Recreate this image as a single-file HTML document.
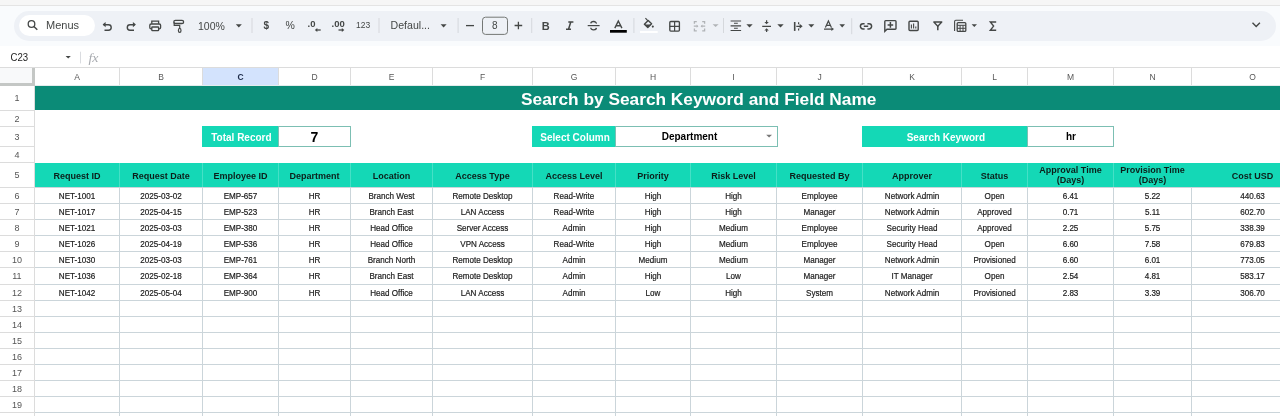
<!DOCTYPE html><html><head><meta charset="utf-8"><style>
*{margin:0;padding:0;box-sizing:border-box}
html,body{width:1280px;height:416px;overflow:hidden;background:#f9fbfd;font-family:"Liberation Sans",sans-serif}
body{position:relative}
div{position:absolute}
svg{position:absolute;left:0;top:0;overflow:visible;will-change:transform}
text{font-family:"Liberation Sans",sans-serif}
.d{font-size:9.2px;fill:#1a1a1a;stroke:#1a1a1a;stroke-width:0.2;text-anchor:middle}
.h{font-size:9px;font-weight:bold;fill:#0c1f1a;text-anchor:middle}
.rn{font-size:9px;fill:#555;text-anchor:middle}
.cl{font-size:8.5px;fill:#575757;text-anchor:middle}
.lb{font-size:10px;font-weight:bold;fill:#fff;text-anchor:middle}
.vb{font-size:10px;font-weight:bold;fill:#000;text-anchor:middle}
.tb{font-size:10.5px;fill:#444746}
.ic{fill:none;stroke:#444746;stroke-width:1.4}
.if{fill:#444746}
</style></head><body>
<div style="left:0px;top:0px;width:1280px;height:5px;background:#f6f6f6"></div>
<div style="left:0px;top:5px;width:1280px;height:1px;background:#e4e4e4"></div>
<div style="left:14px;top:11px;width:1262px;height:30px;background:#eef1f6;border-radius:15px"></div>
<div style="left:19px;top:15px;width:76px;height:21px;background:#fff;border-radius:11px"></div>
<div style="left:0px;top:46px;width:1280px;height:21px;background:#fff"></div>
<div style="left:0px;top:67px;width:1280px;height:349px;background:#fff"></div>
<div style="left:0px;top:67px;width:1280px;height:1px;background:#dcdcdc"></div>
<div style="left:0px;top:68px;width:34px;height:17px;background:#f8f9fa"></div>
<div style="left:32px;top:68px;width:3px;height:18px;background:#c4c7c5"></div>
<div style="left:0px;top:83px;width:35px;height:3px;background:#c4c7c5"></div>
<div style="left:203px;top:68px;width:75px;height:17px;background:#d3e3fd"></div>
<div style="left:119px;top:68px;width:1px;height:17px;background:#dcdcdc"></div>
<div style="left:202px;top:68px;width:1px;height:17px;background:#dcdcdc"></div>
<div style="left:278px;top:68px;width:1px;height:17px;background:#dcdcdc"></div>
<div style="left:350px;top:68px;width:1px;height:17px;background:#dcdcdc"></div>
<div style="left:432px;top:68px;width:1px;height:17px;background:#dcdcdc"></div>
<div style="left:532px;top:68px;width:1px;height:17px;background:#dcdcdc"></div>
<div style="left:615px;top:68px;width:1px;height:17px;background:#dcdcdc"></div>
<div style="left:690px;top:68px;width:1px;height:17px;background:#dcdcdc"></div>
<div style="left:776px;top:68px;width:1px;height:17px;background:#dcdcdc"></div>
<div style="left:862px;top:68px;width:1px;height:17px;background:#dcdcdc"></div>
<div style="left:961px;top:68px;width:1px;height:17px;background:#dcdcdc"></div>
<div style="left:1027px;top:68px;width:1px;height:17px;background:#dcdcdc"></div>
<div style="left:1113px;top:68px;width:1px;height:17px;background:#dcdcdc"></div>
<div style="left:1191px;top:68px;width:1px;height:17px;background:#dcdcdc"></div>
<div style="left:35px;top:85px;width:1245px;height:1px;background:#e3ecec"></div>
<div style="left:34px;top:86px;width:1px;height:330px;background:#dcdcdc"></div>
<div style="left:0px;top:110px;width:34px;height:1px;background:#dcdcdc"></div>
<div style="left:0px;top:126px;width:34px;height:1px;background:#dcdcdc"></div>
<div style="left:0px;top:146px;width:34px;height:1px;background:#dcdcdc"></div>
<div style="left:0px;top:162px;width:34px;height:1px;background:#dcdcdc"></div>
<div style="left:0px;top:187px;width:34px;height:1px;background:#dcdcdc"></div>
<div style="left:0px;top:203px;width:34px;height:1px;background:#dcdcdc"></div>
<div style="left:0px;top:219px;width:34px;height:1px;background:#dcdcdc"></div>
<div style="left:0px;top:235px;width:34px;height:1px;background:#dcdcdc"></div>
<div style="left:0px;top:251px;width:34px;height:1px;background:#dcdcdc"></div>
<div style="left:0px;top:267px;width:34px;height:1px;background:#dcdcdc"></div>
<div style="left:0px;top:284px;width:34px;height:1px;background:#dcdcdc"></div>
<div style="left:0px;top:300px;width:34px;height:1px;background:#dcdcdc"></div>
<div style="left:0px;top:316px;width:34px;height:1px;background:#dcdcdc"></div>
<div style="left:0px;top:332px;width:34px;height:1px;background:#dcdcdc"></div>
<div style="left:0px;top:348px;width:34px;height:1px;background:#dcdcdc"></div>
<div style="left:0px;top:364px;width:34px;height:1px;background:#dcdcdc"></div>
<div style="left:0px;top:380px;width:34px;height:1px;background:#dcdcdc"></div>
<div style="left:0px;top:396px;width:34px;height:1px;background:#dcdcdc"></div>
<div style="left:0px;top:412px;width:34px;height:1px;background:#dcdcdc"></div>
<div style="left:0px;top:428px;width:34px;height:1px;background:#dcdcdc"></div>
<div style="left:35px;top:86px;width:1245px;height:24px;background:#0b8b77"></div>
<div style="left:202px;top:126px;width:76px;height:21px;background:#14d8b6"></div>
<div style="left:278px;top:126px;width:73px;height:21px;border:1px solid #7cbfb3;background:#fff"></div>
<div style="left:532px;top:126px;width:83px;height:21px;background:#14d8b6"></div>
<div style="left:615px;top:126px;width:163px;height:21px;border:1px solid #7cbfb3;background:#fff"></div>
<div style="left:862px;top:126px;width:165px;height:21px;background:#14d8b6"></div>
<div style="left:1027px;top:126px;width:87px;height:21px;border:1px solid #7cbfb3;background:#fff"></div>
<div style="left:35px;top:163px;width:1245px;height:24px;background:#14d8b6"></div>
<div style="left:119px;top:163px;width:1px;height:24px;background:#45e0c6"></div>
<div style="left:202px;top:163px;width:1px;height:24px;background:#45e0c6"></div>
<div style="left:278px;top:163px;width:1px;height:24px;background:#45e0c6"></div>
<div style="left:350px;top:163px;width:1px;height:24px;background:#45e0c6"></div>
<div style="left:432px;top:163px;width:1px;height:24px;background:#45e0c6"></div>
<div style="left:532px;top:163px;width:1px;height:24px;background:#45e0c6"></div>
<div style="left:615px;top:163px;width:1px;height:24px;background:#45e0c6"></div>
<div style="left:690px;top:163px;width:1px;height:24px;background:#45e0c6"></div>
<div style="left:776px;top:163px;width:1px;height:24px;background:#45e0c6"></div>
<div style="left:862px;top:163px;width:1px;height:24px;background:#45e0c6"></div>
<div style="left:961px;top:163px;width:1px;height:24px;background:#45e0c6"></div>
<div style="left:1027px;top:163px;width:1px;height:24px;background:#45e0c6"></div>
<div style="left:1113px;top:163px;width:1px;height:24px;background:#45e0c6"></div>
<div style="left:119px;top:188px;width:1px;height:228px;background:#cbd5da"></div>
<div style="left:202px;top:188px;width:1px;height:228px;background:#cbd5da"></div>
<div style="left:278px;top:188px;width:1px;height:228px;background:#cbd5da"></div>
<div style="left:350px;top:188px;width:1px;height:228px;background:#cbd5da"></div>
<div style="left:432px;top:188px;width:1px;height:228px;background:#cbd5da"></div>
<div style="left:532px;top:188px;width:1px;height:228px;background:#cbd5da"></div>
<div style="left:615px;top:188px;width:1px;height:228px;background:#cbd5da"></div>
<div style="left:690px;top:188px;width:1px;height:228px;background:#cbd5da"></div>
<div style="left:776px;top:188px;width:1px;height:228px;background:#cbd5da"></div>
<div style="left:862px;top:188px;width:1px;height:228px;background:#cbd5da"></div>
<div style="left:961px;top:188px;width:1px;height:228px;background:#cbd5da"></div>
<div style="left:1027px;top:188px;width:1px;height:228px;background:#cbd5da"></div>
<div style="left:1113px;top:188px;width:1px;height:228px;background:#cbd5da"></div>
<div style="left:1191px;top:188px;width:1px;height:228px;background:#cbd5da"></div>
<div style="left:35px;top:187px;width:1245px;height:1px;background:#cbd5da"></div>
<div style="left:35px;top:203px;width:1245px;height:1px;background:#cbd5da"></div>
<div style="left:35px;top:219px;width:1245px;height:1px;background:#cbd5da"></div>
<div style="left:35px;top:235px;width:1245px;height:1px;background:#cbd5da"></div>
<div style="left:35px;top:251px;width:1245px;height:1px;background:#cbd5da"></div>
<div style="left:35px;top:267px;width:1245px;height:1px;background:#cbd5da"></div>
<div style="left:35px;top:284px;width:1245px;height:1px;background:#cbd5da"></div>
<div style="left:35px;top:300px;width:1245px;height:1px;background:#cbd5da"></div>
<div style="left:35px;top:316px;width:1245px;height:1px;background:#cbd5da"></div>
<div style="left:35px;top:332px;width:1245px;height:1px;background:#cbd5da"></div>
<div style="left:35px;top:348px;width:1245px;height:1px;background:#cbd5da"></div>
<div style="left:35px;top:364px;width:1245px;height:1px;background:#cbd5da"></div>
<div style="left:35px;top:380px;width:1245px;height:1px;background:#cbd5da"></div>
<div style="left:35px;top:396px;width:1245px;height:1px;background:#cbd5da"></div>
<div style="left:35px;top:412px;width:1245px;height:1px;background:#cbd5da"></div>
<div style="left:35px;top:428px;width:1245px;height:1px;background:#cbd5da"></div>
<svg width="1280" height="416" viewBox="0 0 1280 416"><text x="77.0" y="80" class="cl" >A</text><text x="161.0" y="80" class="cl" >B</text><text x="240.5" y="80" class="cl" style="font-weight:bold;fill:#1b2a48">C</text><text x="314.5" y="80" class="cl" >D</text><text x="391.5" y="80" class="cl" >E</text><text x="482.5" y="80" class="cl" >F</text><text x="574.0" y="80" class="cl" >G</text><text x="653.0" y="80" class="cl" >H</text><text x="733.5" y="80" class="cl" >I</text><text x="819.5" y="80" class="cl" >J</text><text x="912.0" y="80" class="cl" >K</text><text x="994.5" y="80" class="cl" >L</text><text x="1070.5" y="80" class="cl" >M</text><text x="1152.5" y="80" class="cl" >N</text><text x="1252.5" y="80" class="cl" >O</text><text x="16.9" y="101.4" class="rn" >1</text><text x="16.9" y="121.9" class="rn" >2</text><text x="16.9" y="139.9" class="rn" >3</text><text x="16.9" y="157.9" class="rn" >4</text><text x="16.9" y="178.4" class="rn" >5</text><text x="16.9" y="198.9" class="rn" >6</text><text x="16.9" y="214.9" class="rn" >7</text><text x="16.9" y="230.9" class="rn" >8</text><text x="16.9" y="246.9" class="rn" >9</text><text x="16.9" y="262.9" class="rn" >10</text><text x="16.9" y="279.4" class="rn" >11</text><text x="16.9" y="295.9" class="rn" >12</text><text x="16.9" y="311.9" class="rn" >13</text><text x="16.9" y="327.9" class="rn" >14</text><text x="16.9" y="343.9" class="rn" >15</text><text x="16.9" y="359.9" class="rn" >16</text><text x="16.9" y="375.9" class="rn" >17</text><text x="16.9" y="391.9" class="rn" >18</text><text x="16.9" y="407.9" class="rn" >19</text><text x="16.9" y="423.9" class="rn" >20</text><text x="521" y="104.6" style="font-size:17.3px;font-weight:bold;fill:#fff">Search by Search Keyword and Field Name</text><text x="241.4" y="140.8" class="lb" >Total Record</text><text x="575.1" y="140.8" class="lb" >Select Column</text><text x="945.9" y="140.8" class="lb" >Search Keyword</text><text x="314.5" y="142.2" class="vb" style="font-size:14px">7</text><text x="689.5" y="140.2" class="vb" >Department</text><text x="1071" y="140.2" class="vb" >hr</text><path d="M766.2 134.8L772 134.8L769.1 137.6Z" fill="#777"/><text x="77.0" y="178.6" class="h" >Request ID</text><text x="161.0" y="178.6" class="h" >Request Date</text><text x="240.5" y="178.6" class="h" >Employee ID</text><text x="314.5" y="178.6" class="h" >Department</text><text x="391.5" y="178.6" class="h" >Location</text><text x="482.5" y="178.6" class="h" >Access Type</text><text x="574.0" y="178.6" class="h" >Access Level</text><text x="653.0" y="178.6" class="h" >Priority</text><text x="733.5" y="178.6" class="h" >Risk Level</text><text x="819.5" y="178.6" class="h" >Requested By</text><text x="912.0" y="178.6" class="h" >Approver</text><text x="994.5" y="178.6" class="h" >Status</text><text x="1070.5" y="173.2" class="h" >Approval Time</text><text x="1070.5" y="183.2" class="h" >(Days)</text><text x="1152.5" y="173.2" class="h" >Provision Time</text><text x="1152.5" y="183.2" class="h" >(Days)</text><text x="1252.5" y="178.6" class="h" >Cost USD</text><text transform="translate(77.0 198.8) scale(0.88 1)" class="d">NET-1001</text><text transform="translate(161.0 198.8) scale(0.88 1)" class="d">2025-03-02</text><text transform="translate(240.5 198.8) scale(0.88 1)" class="d">EMP-657</text><text transform="translate(314.5 198.8) scale(0.88 1)" class="d">HR</text><text transform="translate(391.5 198.8) scale(0.88 1)" class="d">Branch West</text><text transform="translate(482.5 198.8) scale(0.88 1)" class="d">Remote Desktop</text><text transform="translate(574.0 198.8) scale(0.88 1)" class="d">Read-Write</text><text transform="translate(653.0 198.8) scale(0.88 1)" class="d">High</text><text transform="translate(733.5 198.8) scale(0.88 1)" class="d">High</text><text transform="translate(819.5 198.8) scale(0.88 1)" class="d">Employee</text><text transform="translate(912.0 198.8) scale(0.88 1)" class="d">Network Admin</text><text transform="translate(994.5 198.8) scale(0.88 1)" class="d">Open</text><text transform="translate(1070.5 198.8) scale(0.88 1)" class="d">6.41</text><text transform="translate(1152.5 198.8) scale(0.88 1)" class="d">5.22</text><text transform="translate(1252.5 198.8) scale(0.88 1)" class="d">440.63</text><text transform="translate(77.0 214.8) scale(0.88 1)" class="d">NET-1017</text><text transform="translate(161.0 214.8) scale(0.88 1)" class="d">2025-04-15</text><text transform="translate(240.5 214.8) scale(0.88 1)" class="d">EMP-523</text><text transform="translate(314.5 214.8) scale(0.88 1)" class="d">HR</text><text transform="translate(391.5 214.8) scale(0.88 1)" class="d">Branch East</text><text transform="translate(482.5 214.8) scale(0.88 1)" class="d">LAN Access</text><text transform="translate(574.0 214.8) scale(0.88 1)" class="d">Read-Write</text><text transform="translate(653.0 214.8) scale(0.88 1)" class="d">High</text><text transform="translate(733.5 214.8) scale(0.88 1)" class="d">High</text><text transform="translate(819.5 214.8) scale(0.88 1)" class="d">Manager</text><text transform="translate(912.0 214.8) scale(0.88 1)" class="d">Network Admin</text><text transform="translate(994.5 214.8) scale(0.88 1)" class="d">Approved</text><text transform="translate(1070.5 214.8) scale(0.88 1)" class="d">0.71</text><text transform="translate(1152.5 214.8) scale(0.88 1)" class="d">5.11</text><text transform="translate(1252.5 214.8) scale(0.88 1)" class="d">602.70</text><text transform="translate(77.0 230.8) scale(0.88 1)" class="d">NET-1021</text><text transform="translate(161.0 230.8) scale(0.88 1)" class="d">2025-03-03</text><text transform="translate(240.5 230.8) scale(0.88 1)" class="d">EMP-380</text><text transform="translate(314.5 230.8) scale(0.88 1)" class="d">HR</text><text transform="translate(391.5 230.8) scale(0.88 1)" class="d">Head Office</text><text transform="translate(482.5 230.8) scale(0.88 1)" class="d">Server Access</text><text transform="translate(574.0 230.8) scale(0.88 1)" class="d">Admin</text><text transform="translate(653.0 230.8) scale(0.88 1)" class="d">High</text><text transform="translate(733.5 230.8) scale(0.88 1)" class="d">Medium</text><text transform="translate(819.5 230.8) scale(0.88 1)" class="d">Employee</text><text transform="translate(912.0 230.8) scale(0.88 1)" class="d">Security Head</text><text transform="translate(994.5 230.8) scale(0.88 1)" class="d">Approved</text><text transform="translate(1070.5 230.8) scale(0.88 1)" class="d">2.25</text><text transform="translate(1152.5 230.8) scale(0.88 1)" class="d">5.75</text><text transform="translate(1252.5 230.8) scale(0.88 1)" class="d">338.39</text><text transform="translate(77.0 246.8) scale(0.88 1)" class="d">NET-1026</text><text transform="translate(161.0 246.8) scale(0.88 1)" class="d">2025-04-19</text><text transform="translate(240.5 246.8) scale(0.88 1)" class="d">EMP-536</text><text transform="translate(314.5 246.8) scale(0.88 1)" class="d">HR</text><text transform="translate(391.5 246.8) scale(0.88 1)" class="d">Head Office</text><text transform="translate(482.5 246.8) scale(0.88 1)" class="d">VPN Access</text><text transform="translate(574.0 246.8) scale(0.88 1)" class="d">Read-Write</text><text transform="translate(653.0 246.8) scale(0.88 1)" class="d">High</text><text transform="translate(733.5 246.8) scale(0.88 1)" class="d">Medium</text><text transform="translate(819.5 246.8) scale(0.88 1)" class="d">Employee</text><text transform="translate(912.0 246.8) scale(0.88 1)" class="d">Security Head</text><text transform="translate(994.5 246.8) scale(0.88 1)" class="d">Open</text><text transform="translate(1070.5 246.8) scale(0.88 1)" class="d">6.60</text><text transform="translate(1152.5 246.8) scale(0.88 1)" class="d">7.58</text><text transform="translate(1252.5 246.8) scale(0.88 1)" class="d">679.83</text><text transform="translate(77.0 262.8) scale(0.88 1)" class="d">NET-1030</text><text transform="translate(161.0 262.8) scale(0.88 1)" class="d">2025-03-03</text><text transform="translate(240.5 262.8) scale(0.88 1)" class="d">EMP-761</text><text transform="translate(314.5 262.8) scale(0.88 1)" class="d">HR</text><text transform="translate(391.5 262.8) scale(0.88 1)" class="d">Branch North</text><text transform="translate(482.5 262.8) scale(0.88 1)" class="d">Remote Desktop</text><text transform="translate(574.0 262.8) scale(0.88 1)" class="d">Admin</text><text transform="translate(653.0 262.8) scale(0.88 1)" class="d">Medium</text><text transform="translate(733.5 262.8) scale(0.88 1)" class="d">Medium</text><text transform="translate(819.5 262.8) scale(0.88 1)" class="d">Manager</text><text transform="translate(912.0 262.8) scale(0.88 1)" class="d">Network Admin</text><text transform="translate(994.5 262.8) scale(0.88 1)" class="d">Provisioned</text><text transform="translate(1070.5 262.8) scale(0.88 1)" class="d">6.60</text><text transform="translate(1152.5 262.8) scale(0.88 1)" class="d">6.01</text><text transform="translate(1252.5 262.8) scale(0.88 1)" class="d">773.05</text><text transform="translate(77.0 278.8) scale(0.88 1)" class="d">NET-1036</text><text transform="translate(161.0 278.8) scale(0.88 1)" class="d">2025-02-18</text><text transform="translate(240.5 278.8) scale(0.88 1)" class="d">EMP-364</text><text transform="translate(314.5 278.8) scale(0.88 1)" class="d">HR</text><text transform="translate(391.5 278.8) scale(0.88 1)" class="d">Branch East</text><text transform="translate(482.5 278.8) scale(0.88 1)" class="d">Remote Desktop</text><text transform="translate(574.0 278.8) scale(0.88 1)" class="d">Admin</text><text transform="translate(653.0 278.8) scale(0.88 1)" class="d">High</text><text transform="translate(733.5 278.8) scale(0.88 1)" class="d">Low</text><text transform="translate(819.5 278.8) scale(0.88 1)" class="d">Manager</text><text transform="translate(912.0 278.8) scale(0.88 1)" class="d">IT Manager</text><text transform="translate(994.5 278.8) scale(0.88 1)" class="d">Open</text><text transform="translate(1070.5 278.8) scale(0.88 1)" class="d">2.54</text><text transform="translate(1152.5 278.8) scale(0.88 1)" class="d">4.81</text><text transform="translate(1252.5 278.8) scale(0.88 1)" class="d">583.17</text><text transform="translate(77.0 295.8) scale(0.88 1)" class="d">NET-1042</text><text transform="translate(161.0 295.8) scale(0.88 1)" class="d">2025-05-04</text><text transform="translate(240.5 295.8) scale(0.88 1)" class="d">EMP-900</text><text transform="translate(314.5 295.8) scale(0.88 1)" class="d">HR</text><text transform="translate(391.5 295.8) scale(0.88 1)" class="d">Head Office</text><text transform="translate(482.5 295.8) scale(0.88 1)" class="d">LAN Access</text><text transform="translate(574.0 295.8) scale(0.88 1)" class="d">Admin</text><text transform="translate(653.0 295.8) scale(0.88 1)" class="d">Low</text><text transform="translate(733.5 295.8) scale(0.88 1)" class="d">High</text><text transform="translate(819.5 295.8) scale(0.88 1)" class="d">System</text><text transform="translate(912.0 295.8) scale(0.88 1)" class="d">Network Admin</text><text transform="translate(994.5 295.8) scale(0.88 1)" class="d">Provisioned</text><text transform="translate(1070.5 295.8) scale(0.88 1)" class="d">2.83</text><text transform="translate(1152.5 295.8) scale(0.88 1)" class="d">3.39</text><text transform="translate(1252.5 295.8) scale(0.88 1)" class="d">306.70</text><circle cx="31.5" cy="24" r="3.3" class="ic" style="stroke-width:1.3"/><path d="M33.9 26.5L37.3 29.8" class="ic" style="stroke-width:1.4"/><text x="46" y="29.2" style="font-size:10px;fill:#444746" textLength="33" lengthAdjust="spacingAndGlyphs">Menus</text><path d="M103.5 24.8H108.5a2.7 2.7 0 0 1 0 5.4H104.5" class="ic"/><path d="M102.6 24.6L105.6 21.9V27.3Z" class="if"/><path d="M135 24.8H130a2.7 2.7 0 0 0 0 5.4H134" class="ic"/><path d="M135.9 24.6L132.9 21.9V27.3Z" class="if"/><path d="M151.8 23.8V21.2H158.6V23.8" class="ic" style="stroke-width:1.3"/><rect x="149.8" y="24" width="10.8" height="4.8" rx="1.3" class="ic" style="stroke-width:1.3"/><rect x="151.8" y="27" width="6.8" height="3.6" rx="0.6" class="ic" style="fill:#eef1f6;stroke-width:1.3"/><rect x="173.8" y="20.3" width="9.8" height="3.2" rx="1.6" class="ic" style="stroke-width:1.3"/><path d="M174.2 22.2V25.3H179.7V28" class="ic" style="stroke-width:1.2"/><ellipse cx="179.7" cy="30.4" rx="1.3" ry="2" class="ic" style="stroke-width:1.2"/><text x="198" y="29.6" class="tb" >100%</text><path d="M235.8 24.2H241.8L238.8 27.4Z" class="if"/><rect x="251.5" y="18" width="1" height="15" fill="#d5d8dc"/><text x="263.5" y="29.4" style="font-size:10px;font-weight:bold;fill:#444746">$</text><text x="285.5" y="29.4" style="font-size:10.5px;fill:#444746">%</text><text x="307.5" y="26.6" style="font-size:9.5px;font-weight:bold;fill:#444746">.0</text><path d="M316.5 30H320.7" class="ic" style="stroke-width:1.3"/><path d="M314.8 30L317.3 28V32Z" class="if"/><text x="331.5" y="26.6" style="font-size:9.5px;font-weight:bold;fill:#444746">.00</text><path d="M338.5 30H342.5" class="ic" style="stroke-width:1.3"/><path d="M344.3 30L341.8 28V32Z" class="if"/><text x="356" y="28.4" style="font-size:9px;fill:#444746" textLength="14.2" lengthAdjust="spacingAndGlyphs">123</text><rect x="378.5" y="18" width="1" height="15" fill="#d5d8dc"/><text x="390.5" y="28.6" class="tb" textLength="39.5" lengthAdjust="spacingAndGlyphs">Defaul...</text><path d="M440.6 24.2H446.6L443.6 27.4Z" class="if"/><rect x="457.6" y="18" width="1" height="15" fill="#d5d8dc"/><path d="M466 25.6H474" class="ic" style="stroke-width:1.3"/><rect x="482.5" y="17.2" width="25" height="17.2" rx="3" fill="none" stroke="#747775" stroke-width="1"/><text x="494.8" y="28.8" style="font-size:10px;fill:#444746;text-anchor:middle">8</text><path d="M514.6 25.5H522.2M518.4 21.7V29.3" class="ic" style="stroke-width:1.3"/><rect x="531.2" y="18" width="1" height="15" fill="#d5d8dc"/><text x="541.8" y="29.6" style="font-size:11px;font-weight:bold;fill:#444746">B</text><path d="M568.3 21.9H573.4M566 29.2H571M570.8 21.9L568.5 29.2" class="ic" style="stroke-width:1.5"/><path d="M587.7 25.6H599.6" class="ic" style="stroke-width:1.2"/><path d="M596.4 23.6A2.8 2 0 0 0 590.8 23.4M590.8 27.7A2.8 2 0 0 0 596.4 27.9" class="ic" style="stroke-width:1.3"/><path d="M614.8 28.1L618.3 21L621.9 28.1M616 25.8H620.7" class="ic" style="stroke-width:1.4"/><rect x="610" y="30" width="16.8" height="2.7" fill="#000"/><rect x="633.4" y="18" width="1" height="15" fill="#d5d8dc"/><path d="M645.4 18.2L648 20.8" class="ic" style="stroke-width:1.2"/><path d="M648.2 20.4L651.6 23.8L647.8 27.6L644.4 24.2Z" class="ic" style="stroke-width:1.4;stroke-linejoin:round"/><path d="M644.8 24.4H651.2L647.8 27.6Z" class="if"/><circle cx="652.8" cy="26.6" r="1.05" class="if"/><rect x="640" y="31" width="17.7" height="2" fill="#fff"/><rect x="669.8" y="21.5" width="9.6" height="9.6" rx="1" class="ic" style="stroke-width:1.35"/><path d="M674.6 21.5V31.1M669.8 26.3H679.4" class="ic" style="stroke-width:1.2"/><path d="M696.8 21.6H694.4V23.8M694.4 28.6V30.8H696.8M702.2 21.6H704.6V23.8M704.6 28.6V30.8H702.2M693.8 26.2H697.4M705.2 26.2H701.6" fill="none" stroke="#b0b3b6" stroke-width="1.3"/><path d="M698.4 26.2L696.6 24.6V27.8Z" fill="#b0b3b6"/><path d="M700.6 26.2L702.4 24.6V27.8Z" fill="#b0b3b6"/><path d="M712.6 24.3H718.6L715.6 27.1Z" fill="#b0b3b6"/><rect x="723" y="18" width="1" height="15" fill="#d5d8dc"/><path d="M730.6 21H741.1M734 23.2H737.8M730.6 25.9H741.1M734 28.3H737.8M730.6 30.5H741.1" class="ic" style="stroke-width:1.1"/><path d="M746.4 24.2H752.7L749.5 27.4Z" class="if"/><path d="M762.2 26.3H771M766.6 20.3V22.5M766.6 30V32" class="ic" style="stroke-width:1.2"/><path d="M764.4 22L768.8 22L766.6 24.2Z" class="if"/><path d="M764.4 30.4L768.8 30.4L766.6 28.2Z" class="if"/><path d="M777.3 24.2H783.7L780.5 27.4Z" class="if"/><path d="M794.7 22V30.9" class="ic" style="stroke-width:1.6"/><path d="M796.3 26.3H800.6M798.6 22.2V24.2M798.6 28.4V30.6" class="ic" style="stroke-width:1.2"/><path d="M799.6 23.8L802.6 26.3L799.6 28.8Z" class="if"/><path d="M808.3 24.2H814.3L811.3 27.4Z" class="if"/><path d="M825.4 27.4L828.4 21L831.4 27.4M826.4 25.4H830.4M824 29.1H832" class="ic" style="stroke-width:1.2"/><path d="M834 29.1L831.4 27.3V30.9Z" class="if"/><path d="M839.4 24.2H845L842.2 27.4Z" class="if"/><rect x="851.2" y="18.2" width="1" height="16" fill="#d5d8dc"/><path d="M864.6 23.7H863a2.6 2.6 0 0 0 0 5.2H864.6M867.4 23.7H869a2.6 2.6 0 0 1 0 5.2H867.4M863.8 26.3H868.2" class="ic" style="stroke-width:1.5"/><path d="M884.8 31.4V21.4a0.8 0.8 0 0 1 0.8-0.8H895.2a0.8 0.8 0 0 1 0.8 0.8V28.4a0.8 0.8 0 0 1-0.8 0.8H887Z" class="ic" style="stroke-width:1.4"/><path d="M887.6 24.9H893.2M890.4 22.1V27.7" class="ic" style="stroke-width:1.5"/><rect x="909" y="21.3" width="9.2" height="9.2" rx="1" class="ic" style="stroke-width:1.4"/><path d="M911.4 24.6V28.4M913.6 23.4V28.4M915.8 26.6V28.4" class="ic" style="stroke-width:1.1"/><path d="M933.8 22H941.8L937.8 26.3Z" class="ic" style="stroke-width:1.3;stroke-linejoin:round"/><path d="M937.8 26V30.2" class="ic" style="stroke-width:1.5"/><path d="M954.6 31V21.5a1.2 1.2 0 0 1 1.2-1.2H963" class="ic" style="stroke-width:1.1"/><rect x="957.2" y="22.6" width="8.6" height="8.8" rx="1" class="ic" style="stroke-width:1.3"/><path d="M957.2 25.3H965.8M957.2 28.3H965.8M960.1 25.3V31.4M963 25.3V31.4" class="ic" style="stroke-width:1"/><path d="M971.6 24.2H977L974.3 26.9Z" class="if"/><path d="M996.2 22H990.3L993.6 26.1L990.3 30.2H996.2" class="ic" style="stroke-width:1.4;stroke-linejoin:miter"/><path d="M1252.5 22.8L1256.2 26.5L1259.9 22.8" class="ic" style="stroke-width:1.4"/><text x="10.5" y="60.8" style="font-size:10.3px;fill:#1f1f1f" textLength="17.6" lengthAdjust="spacingAndGlyphs">C23</text><path d="M65.6 56H70.8L68.2 58.4Z" class="if"/><rect x="80" y="51.7" width="1" height="11.7" fill="#dadce0"/><text x="88.5" y="61.5" style="font-size:12px;font-style:italic;fill:#a8abb0;font-family:Liberation Serif" textLength="10" lengthAdjust="spacingAndGlyphs">fx</text></svg>
</body></html>
